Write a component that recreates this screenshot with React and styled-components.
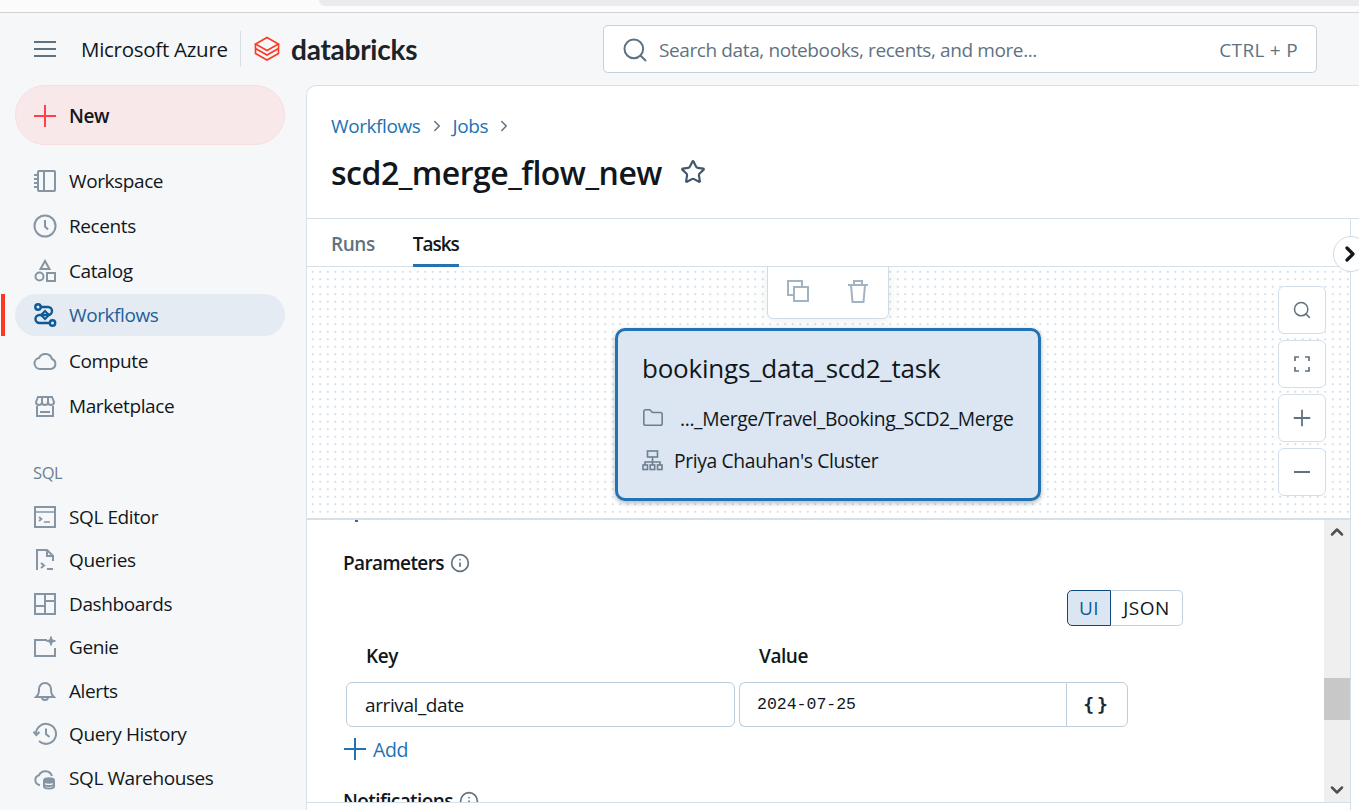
import React from 'react'
import styled, { createGlobalStyle } from 'styled-components'
import { ChevronRight, ChevronUp, ChevronDown, Star, Search, Info, Folder } from 'lucide-react'

const GlobalStyle = createGlobalStyle`
  html, body {
    margin: 0;
    padding: 0;
    height: 100%;
    overflow: hidden;
    background: #f6f7f9;
    font-family: "Open Sans", "Noto Sans", sans-serif;
    color: #11171c;
  }
  * { box-sizing: border-box; }
`

const Page = styled.div`
  width: 1359px;
  height: 810px;
  display: flex;
  flex-direction: column;
  overflow: hidden;
`
const BrowserStrip = styled.div`
  height: 13px;
  flex-shrink: 0;
  background: #fbfbfb;
  border-bottom: 1px solid #d4d4d6;
  padding-left: 319px;
`
const BrowserPill = styled.div`
  height: 6px;
  background: #ebebed;
  border-radius: 0 0 0 6px;
`
const Header = styled.header`
  height: 72px;
  flex-shrink: 0;
  display: flex;
  align-items: center;
  padding-left: 33px;
`
const MenuButton = styled.div`
  width: 24px;
  height: 24px;
  color: #5f7281;
  display: flex;
  align-items: center;
`
const Azure = styled.div`
  margin-left: 24px;
  font-size: 20.5px;
  letter-spacing: -0.27px;
  color: #11171c;
  width: 160px;
  height: 36px;
  line-height: 36px;
  border-right: 1px solid #d8dfe5;
  white-space: nowrap;
`
const BrandMark = styled.svg`
  margin-left: 13px;
  flex-shrink: 0;
`
const BrandName = styled.div`
  margin-left: 11px;
  width: 312px;
  font-family: "Lato", sans-serif;
  font-weight: 700;
  font-size: 28px;
  letter-spacing: -0.25px;
  color: #1b2228;
`
const SearchBox = styled.div`
  width: 714px;
  height: 48px;
  background: #fff;
  border: 1px solid #c4d0dc;
  border-radius: 5px;
  display: flex;
  align-items: center;
  padding: 1px 18px 0 17px;
  color: #5f7281;
  font-size: 19px;
  letter-spacing: -0.39px;
`
const SearchText = styled.span`
  margin-left: 10px;
  flex: 1;
`
const Shortcut = styled.span`
  letter-spacing: 0.3px;
`
const Body = styled.div`
  flex: 1;
  display: flex;
  min-height: 0;
`
const Sidebar = styled.nav`
  width: 306px;
  flex-shrink: 0;
  display: flex;
  flex-direction: column;
`
const NewButton = styled.div`
  width: 270px;
  height: 60px;
  flex-shrink: 0;
  margin-left: 15px;
  background: #f8e8ea;
  border: 1px solid #f6dfe0;
  border-radius: 30px;
  display: flex;
  align-items: center;
  gap: 12px;
  padding: 1px 0 0 17px;
  font-size: 19px;
  font-weight: 600;
  letter-spacing: -0.4px;
  color: #ff3f4a;
  span { color: #11171c; }
`
const NavGroup = styled.div`
  display: flex;
  flex-direction: column;
  flex-shrink: 0;
  margin-top: ${p => p.$top}px;
`
const NavItem = styled.div`
  position: relative;
  flex-shrink: 0;
  height: ${p => p.$h}px;
  margin-left: 15px;
  width: 270px;
  display: flex;
  align-items: center;
  gap: 12px;
  padding-left: 18px;
  font-size: 19px;
  letter-spacing: -0.4px;
  color: ${p => (p.$active ? '#1f5f9a' : '#11171c')};
  svg { color: ${p => (p.$active ? '#0e5a96' : '#8595a3')}; flex-shrink: 0; }
  ${p => p.$active && `
    background: #e4ebf3;
    border-radius: 21px;
    height: 42px;
    margin-top: 1px;
    margin-bottom: 2px;
    &::before {
      content: '';
      position: absolute;
      left: -14px;
      top: 0;
      width: 4px;
      height: 42px;
      background: #ff3621;
    }
  `}
`
const NavLabel = styled.div`
  margin: 33px 0 0 33px;
  height: 24px;
  flex-shrink: 0;
  line-height: 24px;
  font-size: 16.5px;
  letter-spacing: -0.4px;
  color: #6e7f8e;
`
const Main = styled.main`
  flex: 1;
  min-width: 0;
  background: #fff;
  border-top: 1px solid #d8e1e9;
  border-left: 1px solid #d8e1e9;
  border-top-left-radius: 10px;
  display: flex;
  flex-direction: column;
  position: relative;
`
const PageHead = styled.div`
  height: 133px;
  flex-shrink: 0;
  padding: 25px 0 0 24px;
  border-bottom: 1px solid #d5dfe8;
`
const Crumbs = styled.div`
  display: flex;
  align-items: center;
  height: 30px;
  font-size: 19px;
  letter-spacing: -0.4px;
  color: #2272b4;
  svg { color: #5f7281; margin: 0 7px; }
`
const TitleRow = styled.div`
  display: flex;
  align-items: center;
  margin-top: 11px;
  height: 40px;
  gap: 18px;
  svg { color: #44576a; }
`
const Title = styled.h1`
  margin: 0;
  font-size: 32px;
  font-weight: 600;
  letter-spacing: -0.5px;
  color: #11171c;
`
const Workarea = styled.div`
  width: 1044px;
  flex: 1;
  min-height: 0;
  display: flex;
  flex-direction: column;
  border-right: 1px solid #d5dfe8;
`
const Tabs = styled.div`
  height: 48px;
  flex-shrink: 0;
  display: flex;
  gap: 38px;
  padding-left: 24px;
  border-bottom: 1px solid #d5dfe8;
`
const Tab = styled.div`
  height: 48px;
  display: flex;
  align-items: center;
  padding-top: 5px;
  font-size: 19px;
  font-weight: 600;
  letter-spacing: ${p => (p.$active ? '-1px' : '-0.45px')};
  color: ${p => (p.$active ? '#11171c' : '#5f7281')};
  border-bottom: 3px solid ${p => (p.$active ? '#2272b4' : 'transparent')};
`
const Canvas = styled.div`
  position: relative;
  height: 253px;
  flex-shrink: 0;
  border-bottom: 2px solid #d5dfe8;
  background-color: #fff;
  background-image: radial-gradient(circle, #d3dee8 1px, transparent 1.2px);
  background-size: 7.5px 7.5px;
  background-position: 2px 1px;
  overflow: hidden;
`
const NodeActions = styled.div`
  position: absolute;
  left: 460px;
  top: -1px;
  width: 122px;
  height: 53px;
  background: #fff;
  border: 1px solid #d0dbe5;
  border-radius: 0 0 6px 6px;
  box-shadow: 0 2px 14px rgba(30, 50, 70, 0.08);
  display: flex;
  align-items: center;
  justify-content: center;
  gap: 36px;
  padding-bottom: 4px;
  color: #a2b3c3;
`
const TaskNode = styled.div`
  position: absolute;
  left: 308px;
  top: 61px;
  width: 426px;
  height: 173px;
  background: #dbe6f2;
  border: 3px solid #2272b4;
  border-radius: 10px;
  box-shadow: 0 2px 5px rgba(30, 50, 70, 0.35);
  padding: 17px 0 0 24px;
`
const TaskTitle = styled.div`
  font-size: 26px;
  letter-spacing: -0.22px;
  line-height: 40px;
  color: #11171c;
`
const TaskRow = styled.div`
  display: flex;
  align-items: center;
  height: 42px;
  font-size: 19.3px;
  letter-spacing: -0.36px;
  color: #11171c;
  gap: ${p => p.$gap}px;
  margin-top: ${p => p.$top || 0}px;
  svg { color: #6d7f8e; flex-shrink: 0; }
`
const ZoomBar = styled.div`
  position: absolute;
  right: 24px;
  top: 19px;
  display: flex;
  flex-direction: column;
  gap: 6px;
`
const ZoomButton = styled.div`
  width: 48px;
  height: 48px;
  background: #fff;
  border: 1px solid #d4dee8;
  border-radius: 6px;
  display: flex;
  align-items: center;
  justify-content: center;
  color: #5f7281;
`
const CollapseButton = styled.div`
  position: absolute;
  left: 1026px;
  top: 150px;
  width: 36px;
  height: 36px;
  border-radius: 50%;
  background: #fff;
  border: 1px solid #cfdbe6;
  display: flex;
  align-items: center;
  padding-left: 4px;
  color: #11171c;
`
const ScrollArea = styled.div`
  flex: 1;
  min-height: 0;
  display: flex;
`
const Form = styled.div`
  flex: 1;
  min-width: 0;
  overflow: hidden;
  padding: 0 0 0 36px;
`
const Clipped = styled.div`
  height: 2px;
  width: 3px;
  margin-left: 12px;
  background: #2272b4;
`
const SectionHead = styled.div`
  display: flex;
  align-items: center;
  gap: 6px;
  font-size: 19px;
  font-weight: 600;
  letter-spacing: -0.6px;
  line-height: 24px;
  margin-top: ${p => p.$top}px;
  svg { color: #5f7281; }
`
const ToggleRow = styled.div`
  display: flex;
  margin: 15px 0 0 724px;
  height: 36px;
`
const ToggleButton = styled.div`
  height: 36px;
  width: ${p => p.$w}px;
  display: flex;
  align-items: center;
  justify-content: center;
  font-size: 19px;
  letter-spacing: 0.5px;
  color: ${p => (p.$on ? '#0e5a96' : '#11171c')};
  background: ${p => (p.$on ? '#dbe6f2' : '#fff')};
  border: 1px solid ${p => (p.$on ? '#0e4a7d' : '#c4d0dc')};
  border-left-width: ${p => (p.$on ? 1 : 0)}px;
  border-radius: ${p => (p.$on ? '5px 0 0 5px' : '0 5px 5px 0')};
`
const ParamGrid = styled.div`
  display: grid;
  grid-template-columns: 393px 327px 62px;
  margin: 12px 0 0 3px;
  width: 782px;
`
const ColHead = styled.div`
  height: 36px;
  line-height: 36px;
  font-size: 19px;
  font-weight: 600;
  letter-spacing: -0.45px;
  padding-left: ${p => p.$pad}px;
  grid-column: ${p => p.$span || 'auto'};
`
const KeyInput = styled.div`
  height: 45px;
  margin-top: 8px;
  width: 389px;
  border: 1px solid #bccddb;
  border-radius: 6px;
  padding-left: 18px;
  font-size: 19px;
  letter-spacing: -0.4px;
  line-height: 44px;
`
const ValueInput = styled.div`
  height: 45px;
  margin-top: 8px;
  border: 1px solid #bccddb;
  border-right: 0;
  border-radius: 6px 0 0 6px;
  padding-left: 17px;
  font-family: "Liberation Mono", monospace;
  font-size: 16.5px;
  line-height: 44px;
`
const BraceButton = styled.div`
  height: 45px;
  margin-top: 8px;
  border: 1px solid #bccddb;
  border-radius: 0 6px 6px 0;
  display: flex;
  align-items: center;
  justify-content: center;
  font-family: "DejaVu Sans Mono", monospace;
  font-weight: 700;
  font-size: 18px;
  letter-spacing: 3px;
  color: #1c2a36;
`
const AddRow = styled.div`
  display: flex;
  align-items: center;
  gap: 6px;
  margin-top: 6px;
  height: 32px;
  font-size: 19.5px;
  letter-spacing: -0.4px;
  color: #2272b4;
`
const Scrollbar = styled.div`
  width: 26px;
  flex-shrink: 0;
  background: #efefef;
  display: flex;
  flex-direction: column;
  align-items: center;
  justify-content: space-between;
  padding: 2px 0;
  position: relative;
  color: #505050;
`
const ScrollThumb = styled.div`
  position: absolute;
  left: 0;
  top: 158px;
  width: 26px;
  height: 42px;
  background: #c8c8c8;
`
const Footer = styled.div`
  height: 8px;
  flex-shrink: 0;
  border-top: 1px solid #d5dfe8;
`

const Ico = ({ children, size = 24 }) => (
  <svg width={size} height={size} viewBox="0 0 24 24" fill="none" stroke="currentColor" strokeWidth="2">
    {children}
  </svg>
)

// lucide's plus is inset, the reference's runs almost edge to edge
const PlusMark = ({ size = 24, weight = 2 }) => (
  <svg width={size} height={size} viewBox="0 0 24 24" fill="none" stroke="currentColor" strokeWidth={weight}>
    <path d="M12 1v22M1 12h22" />
  </svg>
)

const navTop = [
  ['Workspace', <><rect x="5" y="2" width="17" height="20" rx="1" /><path d="M11 2v20M1 6h4M1 10h4M1 14h4M1 18h4" /></>],
  ['Recents', <><circle cx="12" cy="12" r="10.5" /><path d="M12 6v6.5l3 3" /></>],
  ['Catalog', <><path d="M12 2l4.5 8h-9z" /><circle cx="6.5" cy="17.5" r="4" /><rect x="14" y="14" width="8" height="8" /></>],
  ['Workflows', <g strokeWidth="2.4"><circle cx="5" cy="4" r="2.7" /><circle cx="19.5" cy="20" r="2.7" /><path d="M8 4h7a4 4 0 0 1 0 8H6.5a4 4 0 0 0 0 8H16.500" /><path d="M12 8l4 4-4 4-4-4z" strokeWidth="2" /></g>],
  ['Compute', <path d="M7 20a5.500 5.500 0 0 1-1-10.900A7 7 0 0 1 19 10a5.200 5.200 0 0 1-1 10z" />],
  ['Marketplace', <><path d="M4 12v10h16V12" /><path d="M3 8l2-5h14l2 5a3 3 0 0 1-6 0 3 3 0 0 1-6 0 3 3 0 0 1-6 0zM9 3v5M15 3v5" /><path d="M7 18h10" /></>],
]
const navSql = [
  ['SQL Editor', <><rect x="2" y="2" width="20" height="20" /><path d="M2 7h20M6 12l2.500 2-2.500 2M11 17h6" strokeWidth="1.700" /></>],
  ['Queries', <><path d="M4 22V2h10l6 6v5M14 2v6h6" /><path d="M8 15l3 2.500L8 20M14 21h6" /></>],
  ['Dashboards', <><rect x="2" y="2" width="20" height="20" /><path d="M12 2v20M12 9h10M2 14h10" /></>],
  ['Genie', <><path d="M14 5H2v16h20v-8" /><path d="M18 1.500l1.200 3.300L22.500 6l-3.300 1.200L18 10.500l-1.200-3.300L13.500 6l3.300-1.200z" fill="currentColor" strokeWidth="1" /></>],
  ['Alerts', <><path d="M3 18c2-2 3-3 3-8a6 6 0 0 1 12 0c0 5 1 6 3 8z" /><path d="M9 18a3 3 0 0 0 6 0" /></>],
  ['Query History', <><path d="M3 12a10 10 0 1 1 3 7" /><path d="M0.500 9.500L3.300 13l3.200-3" /><path d="M13 6.500V12l3.500 3" /></>],
  ['SQL Warehouses', <><path d="M7 19a5 5 0 0 1-1-9.800A7 7 0 0 1 19 10" /><ellipse cx="16" cy="14.500" rx="5" ry="2.200" fill="currentColor" /><path d="M11 15v5.500c0 1.200 2.200 2 5 2s5-.8 5-2V15M11 18c0 1.200 2.200 2 5 2s5-.8 5-2" /></>],
]

export default function App() {
  return (
    <Page>
      <GlobalStyle />
      <BrowserStrip><BrowserPill /></BrowserStrip>
      <Header>
        <MenuButton>
          <Ico><path d="M1 5h22M1 12h22M1 19h22" /></Ico>
        </MenuButton>
        <Azure>Microsoft Azure</Azure>
        <BrandMark width="26" height="26" viewBox="0 0 26 26" fill="none" stroke="#ff3621" strokeWidth="1.600" strokeLinejoin="miter">
          <path d="M13 1.500L24.500 8 13 14.500 1.500 8z" />
          <path d="M1.500 8v4.500L13 19l11.500-6.500V8" />
          <path d="M1.500 13v4.500L13 24l11.500-6.500V13" />
        </BrandMark>
        <BrandName>databricks</BrandName>
        <SearchBox>
          <Search size={28} strokeWidth={1.7} />
          <SearchText>Search data, notebooks, recents, and more...</SearchText>
          <Shortcut>CTRL + P</Shortcut>
        </SearchBox>
      </Header>
      <Body>
        <Sidebar>
          <NewButton>
            <PlusMark />
            <span>New</span>
          </NewButton>
          <NavGroup $top={13}>
            {navTop.map(([name, icon]) => (
              <NavItem key={name} $h={45} $active={name === 'Workflows'}>
                <Ico>{icon}</Ico>
                {name}
              </NavItem>
            ))}
          </NavGroup>
          <NavLabel>SQL</NavLabel>
          <NavGroup $top={10}>
            {navSql.map(([name, icon]) => (
              <NavItem key={name} $h={43.5}>
                <Ico>{icon}</Ico>
                {name}
              </NavItem>
            ))}
          </NavGroup>
        </Sidebar>
        <Main>
          <PageHead>
            <Crumbs>
              Workflows<ChevronRight size={18} />Jobs<ChevronRight size={18} />
            </Crumbs>
            <TitleRow>
              <Title>scd2_merge_flow_new</Title>
              <Star size={26} strokeWidth={2} />
            </TitleRow>
          </PageHead>
          <Workarea>
            <Tabs>
              <Tab>Runs</Tab>
              <Tab $active>Tasks</Tab>
            </Tabs>
            <Canvas>
              <NodeActions>
                <Ico>
                  <path d="M16 7V2H2v14h5" />
                  <rect x="8" y="8" width="14" height="14" />
                </Ico>
                <Ico>
                  <path d="M2 6h20M8 6V2h8v4" />
                  <path d="M5 6l1.500 17h11L19 6" />
                </Ico>
              </NodeActions>
              <TaskNode>
                <TaskTitle>bookings_data_scd2_task</TaskTitle>
                <TaskRow $gap={16} $top={9}>
                  <Folder size={22} strokeWidth={1.700} />
                  ..._Merge/Travel_Booking_SCD2_Merge
                </TaskRow>
                <TaskRow $gap={11}>
                  <svg width="21" height="21" viewBox="0 0 21 21" fill="none" stroke="currentColor" strokeWidth="1.600">
                    <rect x="5.500" y="1" width="10" height="6" />
                    <path d="M10.500 7v5M3 15v-3h15v3M10.500 12v3" />
                    <rect x="1" y="15" width="4.500" height="4.500" />
                    <rect x="8.200" y="15" width="4.500" height="4.500" />
                    <rect x="15.500" y="15" width="4.500" height="4.500" />
                  </svg>
                  Priya Chauhan's Cluster
                </TaskRow>
              </TaskNode>
              <ZoomBar>
                <ZoomButton><Search size={20} strokeWidth={1.800} /></ZoomButton>
                <ZoomButton>
                  <svg width="16" height="16" viewBox="0 0 16 16" fill="none" stroke="currentColor" strokeWidth="1.700">
                    <path d="M1 5V1h4M11 1h4v4M15 11v4h-4M5 15H1v-4" />
                  </svg>
                </ZoomButton>
                <ZoomButton><PlusMark size={18} weight={2.400} /></ZoomButton>
                <ZoomButton>
                  <svg width="18" height="18" viewBox="0 0 18 18" fill="none" stroke="currentColor" strokeWidth="2">
                    <path d="M1 9h16" />
                  </svg>
                </ZoomButton>
              </ZoomBar>
            </Canvas>
            <ScrollArea>
              <Form>
                <Clipped />
                <SectionHead $top={29}>Parameters <Info size={20} strokeWidth={2} /></SectionHead>
                <ToggleRow>
                  <ToggleButton $on $w={44}>UI</ToggleButton>
                  <ToggleButton $w={72}>JSON</ToggleButton>
                </ToggleRow>
                <ParamGrid>
                  <ColHead $pad={20}>Key</ColHead>
                  <ColHead $pad={20} $span="2 / span 2">Value</ColHead>
                  <KeyInput>arrival_date</KeyInput>
                  <ValueInput>2024-07-25</ValueInput>
                  <BraceButton>{'{}'}</BraceButton>
                </ParamGrid>
                <AddRow><PlusMark />Add</AddRow>
                <SectionHead $top={24}>Notifications <Info size={20} strokeWidth={2} /></SectionHead>
              </Form>
              <Scrollbar>
                <ChevronUp size={20} strokeWidth={3} />
                <ScrollThumb />
                <ChevronDown size={20} strokeWidth={3} />
              </Scrollbar>
            </ScrollArea>
            <Footer />
          </Workarea>
          <CollapseButton><ChevronRight size={24} strokeWidth={3.200} /></CollapseButton>
        </Main>
      </Body>
    </Page>
  )
}
